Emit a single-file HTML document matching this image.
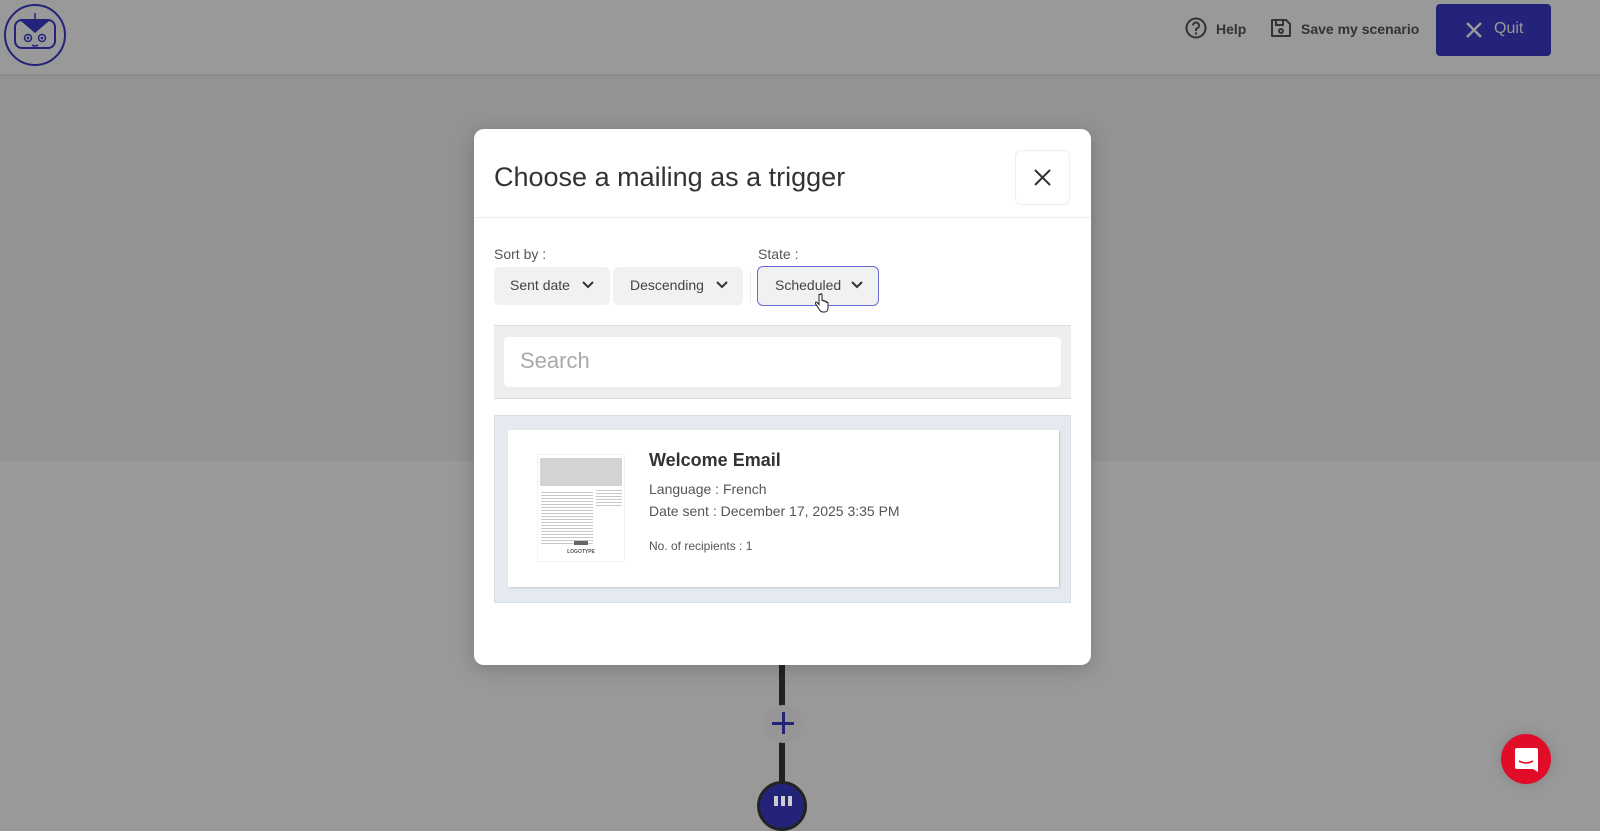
<!DOCTYPE html>
<html><head><meta charset="utf-8"><style>
*{box-sizing:border-box;margin:0;padding:0}
body{width:1600px;height:818px;overflow:hidden;background:#999;font-family:"Liberation Sans",sans-serif;position:relative;color:#333}
.abs{position:absolute}
</style></head><body>
<div class="abs" style="left:0;top:0;width:1600px;height:74px;background:#999"></div>
<div class="abs" style="left:0;top:74px;width:1600px;height:2px;background:#8c8c8c"></div>
<div class="abs" style="left:0;top:76px;width:1600px;height:385px;background:#939393"></div>

<svg class="abs" style="left:3px;top:3px" width="64" height="64" viewBox="0 0 64 64">
<circle cx="32" cy="32" r="30" fill="none" stroke="#23237a" stroke-width="2"/>
<line x1="32" y1="10" x2="32" y2="16" stroke="#23237a" stroke-width="1.5"/>
<rect x="12" y="17" width="40" height="28" rx="7" fill="none" stroke="#23237a" stroke-width="2"/>
<path d="M18 18 L32 30 L46 18 Z" fill="#23237a"/>
<circle cx="25" cy="35" r="3.5" fill="none" stroke="#23237a" stroke-width="1.5"/><circle cx="25" cy="35" r="1.3" fill="#23237a"/>
<circle cx="39" cy="35" r="3.5" fill="none" stroke="#23237a" stroke-width="1.5"/><circle cx="39" cy="35" r="1.3" fill="#23237a"/>
<path d="M29 42 Q32 44 35 42" fill="none" stroke="#23237a" stroke-width="1.5"/>
</svg>

<svg class="abs" style="left:1185px;top:17px" width="22" height="22" viewBox="0 0 22 22"><circle cx="11" cy="11" r="9.5" fill="none" stroke="#333" stroke-width="2"/><path d="M8 8.5a3 3 0 1 1 4 2.8c-.7.3-1 .8-1 1.5V14" fill="none" stroke="#333" stroke-width="2"/><circle cx="11" cy="16.5" r="1.2" fill="#333"/></svg>
<div class="abs" style="left:1216px;top:21px;font-size:14px;font-weight:bold;color:#333">Help</div>
<svg class="abs" style="left:1270px;top:17px" width="22" height="22" viewBox="0 0 22 22"><path d="M2 3h14l4 4v12H2z" fill="none" stroke="#333" stroke-width="2" stroke-linejoin="round"/><rect x="6" y="3" width="7" height="5" fill="none" stroke="#333" stroke-width="2"/><circle cx="11" cy="14" r="2" fill="none" stroke="#333" stroke-width="2"/></svg>
<div class="abs" style="left:1301px;top:21px;font-size:14px;font-weight:bold;color:#333">Save my scenario</div>
<div class="abs" style="left:1436px;top:4px;width:115px;height:52px;background:#23237a;border-radius:4px"></div>
<svg class="abs" style="left:1465px;top:21px" width="18" height="18" viewBox="0 0 18 18"><path d="M2 2L16 16M16 2L2 16" stroke="#999" stroke-width="2.5"/></svg>
<div class="abs" style="left:1494px;top:20px;font-size:16px;color:#999">Quit</div>

<div class="abs" style="left:779px;top:660px;width:6px;height:158px;background:#222"></div>
<div class="abs" style="left:763px;top:705px;width:40px;height:38px;border-radius:50%;background:#969696"></div>
<div class="abs" style="left:772px;top:722px;width:22px;height:3px;background:#23237a"></div>
<div class="abs" style="left:782px;top:712px;width:3px;height:22px;background:#23237a"></div>
<div class="abs" style="left:757px;top:781px;width:50px;height:50px;border-radius:50%;background:#23237a;border:3px solid #222"></div>
<div class="abs" style="left:774px;top:796px;width:4px;height:10px;background:#ccc"></div>
<div class="abs" style="left:781px;top:796px;width:4px;height:10px;background:#ccc"></div>
<div class="abs" style="left:788px;top:796px;width:4px;height:10px;background:#ccc"></div>

<div class="abs" style="left:1501px;top:734px;width:50px;height:50px;border-radius:50%;background:#e00c28;box-shadow:0 0 12px rgba(0,0,0,.15)"></div>
<svg class="abs" style="left:1515px;top:748px" width="23" height="25" viewBox="0 0 23 25"><path d="M2 0h19a2 2 0 0 1 2 2v22l-5-3H2a2 2 0 0 1-2-2V2a2 2 0 0 1 2-2z" fill="#fff"/><path d="M4 13q7 4 14 0" fill="none" stroke="#e00c28" stroke-width="1.6"/></svg>

<div class="abs" style="left:474px;top:129px;width:617px;height:536px;background:#fff;border-radius:10px;box-shadow:0 4px 20px rgba(0,0,0,.2)">
 <div class="abs" style="left:20px;top:33px;font-size:27px;color:#333">Choose a mailing as a trigger</div>
 <div class="abs" style="left:541px;top:21px;width:55px;height:55px;border:1px solid #eee;border-radius:6px"></div>
 <svg class="abs" style="left:560px;top:40px" width="17" height="17" viewBox="0 0 17 17"><path d="M1 1L16 16M16 1L1 16" stroke="#333" stroke-width="2"/></svg>
 <div class="abs" style="left:0;top:88px;width:617px;height:1px;background:#eee"></div>
 <div class="abs" style="left:20px;top:117px;font-size:14px;color:#555">Sort by :</div>
 <div class="abs" style="left:284px;top:117px;font-size:14px;color:#555">State :</div>
 <div class="abs" style="left:20px;top:138px;width:116px;height:38px;background:#f1f1f1;border-radius:5px;font-size:14px;color:#444;padding:10px 0 0 16px">Sent date</div>
 <div class="abs" style="left:139px;top:138px;width:130px;height:38px;background:#f1f1f1;border-radius:5px;font-size:14px;color:#444;padding:10px 0 0 17px">Descending</div>
 <div class="abs" style="left:276px;top:142px;width:1px;height:32px;background:#eee"></div>
 <div class="abs" style="left:283px;top:137px;width:122px;height:40px;background:#f1f1f1;border:1px solid #6a6ad8;border-radius:6px;font-size:14px;color:#444;padding:10px 0 0 17px">Scheduled</div>
 <svg class="abs" style="left:108px;top:152px" width="12" height="8" viewBox="0 0 12 8"><path d="M1 1l5 5 5-5" fill="none" stroke="#333" stroke-width="2"/></svg>
 <svg class="abs" style="left:242px;top:152px" width="12" height="8" viewBox="0 0 12 8"><path d="M1 1l5 5 5-5" fill="none" stroke="#333" stroke-width="2"/></svg>
 <svg class="abs" style="left:377px;top:152px" width="12" height="8" viewBox="0 0 12 8"><path d="M1 1l5 5 5-5" fill="none" stroke="#333" stroke-width="2"/></svg>
 <svg class="abs" style="left:341px;top:164px" width="14" height="20" viewBox="0 0 14 20"><path d="M4 1.5v10l-2-2c-1-1-2.5 0-1.5 1.3L4 16c1 2 2 3 4 3h2c2 0 3-2 3-4V10c0-1-1.5-1-1.5 0V9c0-1-1.5-1-1.5 0V8.5c0-1-1.5-1-1.5 0V8c0-1-1.5-1-1.5 0V1.5c0-1-1.5-1-1.5 0z" fill="#fff" stroke="#222" stroke-width="1"/></svg>
 <div class="abs" style="left:20px;top:196px;width:577px;height:74px;background:#eee;border-top:1px solid #ddd;border-bottom:1px solid #ddd"></div>
 <div class="abs" style="left:30px;top:208px;width:557px;height:50px;background:#fff;border-radius:5px;font-size:22px;color:#aaa;padding:11px 0 0 16px">Search</div>
 <div class="abs" style="left:20px;top:286px;width:577px;height:188px;background:#e4eaf0;border:1px solid #d8dee4"></div>
 <div class="abs" style="left:34px;top:301px;width:551px;height:157px;background:#fff;box-shadow:1px 1px 2px rgba(0,0,0,.15)"></div>
 <div class="abs" style="left:63px;top:325px;width:88px;height:108px;background:#fff;border:1px solid #f2f2f2">
  <div style="margin:3px 2px 0;height:28px;background:#d3d3d3"></div>
  <div style="position:absolute;left:3px;top:35px;width:52px;height:54px;background:repeating-linear-gradient(#fff 0 2px,#c8c8c8 2px 3px)"></div>
  <div style="position:absolute;left:58px;top:33px;width:26px;height:20px;background:repeating-linear-gradient(#fff 0 2px,#c8c8c8 2px 3px)"></div>
  <div style="position:absolute;left:36px;top:86px;width:14px;height:4px;background:#666"></div>
  <div style="position:absolute;left:0;width:86px;top:94px;text-align:center;font-size:5px;font-weight:bold;color:#555">LOGOTYPE</div>
 </div>
 <div class="abs" style="left:175px;top:321px;font-size:18px;font-weight:bold;color:#333">Welcome Email</div>
 <div class="abs" style="left:175px;top:352px;font-size:14px;color:#555">Language : French</div>
 <div class="abs" style="left:175px;top:374px;font-size:14px;color:#555">Date sent : December 17, 2025 3:35 PM</div>
 <div class="abs" style="left:175px;top:410px;font-size:12px;color:#555">No. of recipients : 1</div>
</div>
</body></html>
